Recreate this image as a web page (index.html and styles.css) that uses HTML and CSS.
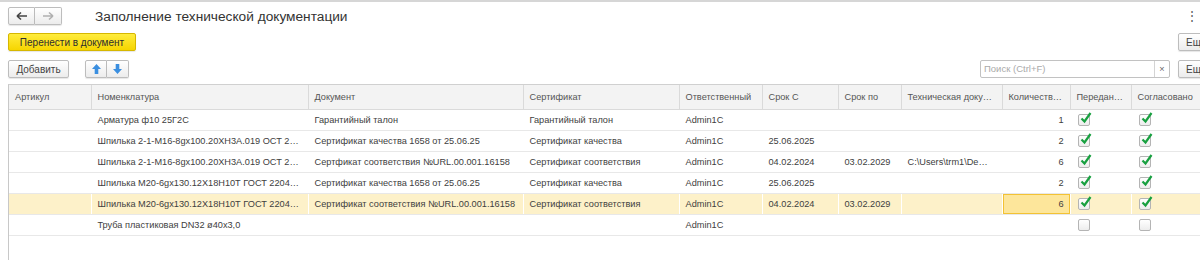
FILE: index.html
```html
<!DOCTYPE html>
<html lang="ru">

<head>
    <meta charset="UTF-8">
    <title>Заполнение технической документации</title>
    <link rel="stylesheet" href="styles.css">
</head>

<body>
    <div class="topline"></div>
    <div class="page">
        <!-- Form header -->
        <div class="head">
            <div class="btn-group nav-group">
                <button class="btn icon-btn">
                    <svg width="12" height="10" viewBox="0 0 12 10"><path d="M1 5H11M1 5L5 1.5M1 5L5 8.5" fill="none" stroke="#444" stroke-width="1.6"/></svg>
                </button>
                <button class="btn icon-btn">
                    <svg width="12" height="10" viewBox="0 0 12 10"><path d="M1 5H11M11 5L7 1.5M11 5L7 8.5" fill="none" stroke="#b0b0b0" stroke-width="1.6"/></svg>
                </button>
            </div>
            <h1 class="title">Заполнение технической документации</h1>
            <span class="dots">⋮</span>
        </div>

        <div class="bar">
            <button class="btn btn-default">Перенести в документ</button>
            <button class="btn btn-more">Ещё ▾</button>
        </div>

        <div class="bar">
            <button class="btn btn-add">Добавить</button>
            <div class="btn-group arrows">
                <button class="btn icon-btn">
                    <svg width="9" height="10" viewBox="0 0 9 10"><path d="M4.5 0L9 5H6.3V10H2.7V5H0Z" fill="#3b8fe0"/></svg>
                </button>
                <button class="btn icon-btn">
                    <svg width="9" height="10" viewBox="0 0 9 10"><path d="M4.5 10L9 5H6.3V0H2.7V5H0Z" fill="#3b8fe0"/></svg>
                </button>
            </div>
            <div class="search">
                <span class="search-text">Поиск (Ctrl+F)</span>
                <span class="search-clear">×</span>
            </div>
            <button class="btn btn-more">Ещё ▾</button>
        </div>

        <!-- Table -->
        <div class="grid-wrap">
            <table class="grid">
                <colgroup>
                    <col style="width:82px">
                    <col style="width:217px">
                    <col style="width:215px">
                    <col style="width:156px">
                    <col style="width:83px">
                    <col style="width:76px">
                    <col style="width:63px">
                    <col style="width:101px">
                    <col style="width:68px">
                    <col style="width:61px">
                    <col>
                </colgroup>
                <thead>
                    <tr>
                        <th>Артикул</th>
                        <th>Номенклатура</th>
                        <th>Документ</th>
                        <th>Сертификат</th>
                        <th>Ответственный</th>
                        <th>Срок С</th>
                        <th>Срок по</th>
                        <th>Техническая доку…</th>
                        <th>Количеств…</th>
                        <th>Передан…</th>
                        <th>Согласовано</th>
                    </tr>
                </thead>
                <tbody>
                    <tr>
                        <td></td>
                        <td>Арматура ф10 25Г2С</td>
                        <td>Гарантийный талон</td>
                        <td>Гарантийный талон</td>
                        <td>Admin1C</td>
                        <td></td>
                        <td></td>
                        <td></td>
                        <td class="num">1</td>
                        <td class="check"><span class="cb on"></span></td>
                        <td class="check"><span class="cb on"></span></td>
                    </tr>
                    <tr>
                        <td></td>
                        <td>Шпилька 2-1-М16-8gx100.20ХН3А.019 ОСТ 2…</td>
                        <td>Сертификат качества 1658 от 25.06.25</td>
                        <td>Сертификат качества</td>
                        <td>Admin1C</td>
                        <td>25.06.2025</td>
                        <td></td>
                        <td></td>
                        <td class="num">2</td>
                        <td class="check"><span class="cb on"></span></td>
                        <td class="check"><span class="cb on"></span></td>
                    </tr>
                    <tr>
                        <td></td>
                        <td>Шпилька 2-1-М16-8gx100.20ХН3А.019 ОСТ 2…</td>
                        <td>Сертфикат соответствия №URL.00.001.16158</td>
                        <td>Сертификат соответствия</td>
                        <td>Admin1C</td>
                        <td>04.02.2024</td>
                        <td>03.02.2029</td>
                        <td>C:\Users\trm1\De…</td>
                        <td class="num">6</td>
                        <td class="check"><span class="cb on"></span></td>
                        <td class="check"><span class="cb on"></span></td>
                    </tr>
                    <tr>
                        <td></td>
                        <td>Шпилька М20-6gx130.12Х18Н10Т ГОСТ 2204…</td>
                        <td>Сертификат качества 1658 от 25.06.25</td>
                        <td>Сертификат качества</td>
                        <td>Admin1C</td>
                        <td>25.06.2025</td>
                        <td></td>
                        <td></td>
                        <td class="num">2</td>
                        <td class="check"><span class="cb on"></span></td>
                        <td class="check"><span class="cb on"></span></td>
                    </tr>
                    <tr class="selected">
                        <td></td>
                        <td>Шпилька М20-6gx130.12Х18Н10Т ГОСТ 2204…</td>
                        <td>Сертификат соответствия №URL.00.001.16158</td>
                        <td>Сертификат соответствия</td>
                        <td>Admin1C</td>
                        <td>04.02.2024</td>
                        <td>03.02.2029</td>
                        <td></td>
                        <td class="num current">6</td>
                        <td class="check"><span class="cb on"></span></td>
                        <td class="check"><span class="cb on"></span></td>
                    </tr>
                    <tr>
                        <td></td>
                        <td>Труба пластиковая DN32 ø40х3,0</td>
                        <td></td>
                        <td></td>
                        <td>Admin1C</td>
                        <td></td>
                        <td></td>
                        <td></td>
                        <td class="num"></td>
                        <td class="check"><span class="cb"></span></td>
                        <td class="check"><span class="cb"></span></td>
                    </tr>
                </tbody>
            </table>
        </div>
    </div>
</body>

</html>
```

FILE: styles.css
```css
/* Reset */
* {
    margin: 0;
    padding: 0;
    box-sizing: border-box;
}

html,
body {
    overflow: hidden;
}

body {
    font-family: 'Liberation Sans', Arial, sans-serif;
    font-size: 9.2px;
    color: #404040;
    background-color: #fff;
    height: 260px;
}

.topline {
    height: 2px;
    background-color: #d6d6d6;
}

.page {
    width: 1230px;
    padding: 5px 0 0 8px;
}

/* Buttons */
.btn {
    height: 18px;
    padding: 0 9px;
    font-family: inherit;
    font-size: 10px;
    color: #444;
    background: linear-gradient(#ffffff, #ececec);
    border: 1px solid #bdbdbd;
    border-radius: 2px;
    box-shadow: 0 1px 1px rgba(0, 0, 0, 0.1);
    flex-shrink: 0;
    display: flex;
    align-items: center;
    justify-content: center;
}

.btn-default {
    background: linear-gradient(#ffec3d, #f6d500);
    border-color: #d6b700;
    color: #2e2e2e;
    width: 128px;
}

.btn-add {
    width: 61px;
}

.btn-more {
    width: 52px;
    justify-content: flex-start;
    padding-left: 7px;
    margin-left: auto;
}

.btn-group {
    display: flex;
}

.btn-group .btn {
    border-radius: 0;
}

.btn-group .btn:first-child {
    border-radius: 2px 0 0 2px;
}

.btn-group .btn:last-child {
    border-radius: 0 2px 2px 0;
    border-left: none;
}

.icon-btn {
    padding: 0;
}

.nav-group .icon-btn {
    width: 27px;
}

.arrows {
    margin-left: 16px;
}

.arrows .icon-btn {
    width: 22px;
}

/* Header */
.head {
    display: flex;
    align-items: center;
    height: 18px;
}

.title {
    margin-left: 33px;
    font-size: 13.7px;
    font-weight: normal;
    color: #333;
}

.dots {
    margin-left: auto;
    margin-right: 32px;
    font-size: 12px;
    color: #555;
}

.bar {
    display: flex;
    align-items: center;
    margin-top: 8px;
}

.bar + .bar {
    margin-top: 9px;
}

/* Search */
.search {
    margin-left: auto;
    margin-right: 8px;
    width: 190px;
    height: 18px;
    display: flex;
    border: 1px solid #c2c2c2;
    border-radius: 2px;
    background-color: #fff;
}

.search + .btn-more {
    margin-left: 0;
}

.search-text {
    flex: 1;
    padding-left: 3px;
    line-height: 16px;
    font-size: 9.5px;
    color: #aaa;
}

.search-clear {
    width: 15px;
    border-left: 1px solid #d4d4d4;
    text-align: center;
    line-height: 16px;
    color: #666;
}

/* Grid */
.grid-wrap {
    margin-top: 6px;
    height: 176px;
    border-left: 1px solid #c8c8c8;
    border-top: 1px solid #d0d0d0;
}

.grid {
    width: 1221px;
    table-layout: fixed;
    border-collapse: collapse;
}

.grid th {
    height: 24px;
    padding: 0 6px;
    text-align: left;
    font-weight: normal;
    color: #555;
    background-color: #f3f3f3;
    border-left: 1px solid #dadada;
    border-bottom: 1px solid #dadada;
    white-space: nowrap;
    overflow: hidden;
}

.grid th:first-child {
    border-left: none;
}

.grid td {
    height: 21px;
    padding: 0 6px;
    border-left: 1px solid #fff;
    border-bottom: 1px solid #e8e8e8;
    white-space: nowrap;
    overflow: hidden;
    text-overflow: ellipsis;
}

.grid td:first-child {
    border-left: none;
}

.grid td.num {
    text-align: right;
}

.grid tr.selected td {
    background-color: #fdf1c9;
}

.grid tr.selected td.current {
    background-color: #fde69b;
    box-shadow: inset 0 0 0 1px #f3c234;
}

.grid td.check {
    padding-left: 7px;
}

/* Checkbox */
.cb {
    position: relative;
    display: block;
    width: 12px;
    height: 12px;
    border: 1px solid #b4b4b4;
    border-radius: 2px;
    background: linear-gradient(#ffffff, #ededed);
}

.cb.on::after {
    content: '';
    position: absolute;
    left: 1px;
    top: -3px;
    width: 12px;
    height: 12px;
    background: url("data:image/svg+xml;utf8,<svg xmlns='http://www.w3.org/2000/svg' viewBox='0 0 12 12'><path d='M1.5 6.5L4.5 9.5L10.5 1' fill='none' stroke='%2318a040' stroke-width='2.2'/></svg>") no-repeat;
}
```
